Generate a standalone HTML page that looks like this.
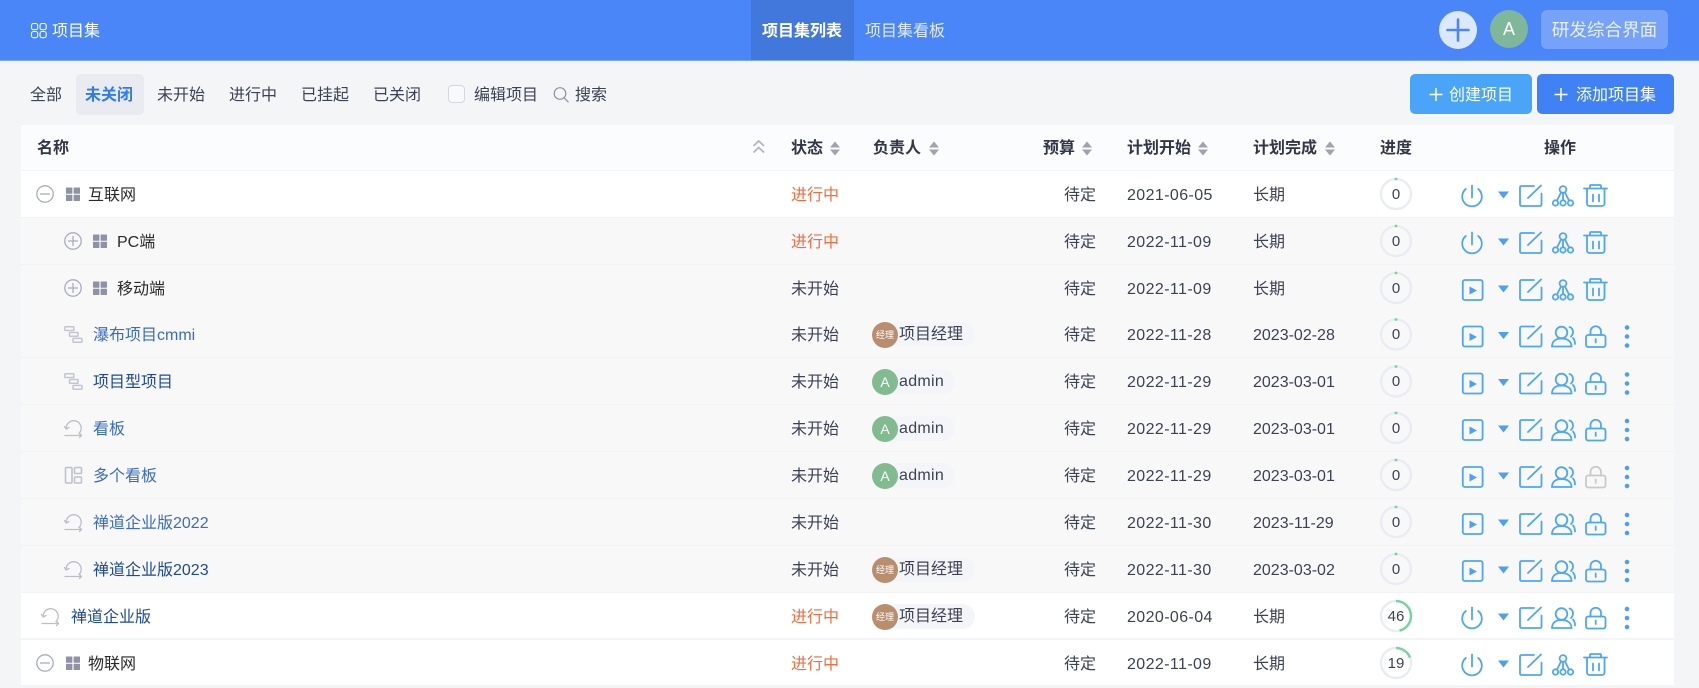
<!DOCTYPE html>
<html lang="zh-CN">
<head>
<meta charset="utf-8">
<title>项目集</title>
<style>
*{box-sizing:border-box;margin:0;padding:0}
html,body{width:1699px;height:688px;overflow:hidden;background:#f4f5f7;font-family:"Liberation Sans","Noto Sans CJK SC",sans-serif;font-size:16px;color:#3b4252}
.a{position:absolute;white-space:nowrap}
#top{position:absolute;left:0;top:0;width:1699px;height:61px;background:#4a86f7;border-bottom:1px solid #7aa6f9}
.t{line-height:40px;top:76px}
.hd{top:126px;line-height:46px;font-weight:700;color:#313746}
.r{position:absolute;left:21px;width:1653px;height:47px;background:#f8f8f9;border-bottom:1px solid #f3f3f5}
.w{background:#fff}
.c{position:absolute;white-space:nowrap;line-height:46px;top:2px}
.n{color:#2a2a2a}
.l1{color:#3a6cc4}
.l2{color:#1d4a9a}
.s{left:770px}
.o{color:#f56b3f}
.b{right:578px}
.d{left:1106px;letter-spacing:.4px}
.e{left:1232px}
.g{left:1355px;width:40px;text-align:center;font-size:15px;top:1px}
.chip{position:absolute;left:864px;top:11px;height:25px;background:#f4f5f8;border-radius:13px;line-height:26px;padding-left:14px;white-space:nowrap}
.av{position:absolute;left:851px;top:11px;width:26px;height:26px;border-radius:50%;color:#fff;text-align:center;line-height:26px}
.br{background:#b98e6e;font-size:9px}
.gr{background:#82bb8f;font-size:14px}
</style>
</head>
<body>
<div id="top"></div>
<div class="a" style="left:751px;top:0;width:103px;height:60px;background:#4277dc"></div>
<div class="a" style="left:52px;top:12px;line-height:40px;color:#fff">项目集</div>
<div class="a" style="left:762px;top:12px;line-height:40px;color:#fff;font-weight:700">项目集列表</div>
<div class="a" style="left:865px;top:12px;line-height:40px;color:#e3ecfe">项目集看板</div>
<div class="a" style="left:1439px;top:11px;width:38px;height:38px;border-radius:50%;background:#dce8fd"></div>
<div class="a" style="left:1490px;top:10px;width:38px;height:38px;border-radius:50%;background:#7fb79b;color:#fff;text-align:center;line-height:38px;font-size:18px">A</div>
<div class="a" style="left:1541px;top:10px;width:127px;height:39px;border-radius:6px;background:#76a2f9;color:#e8effe;text-align:center;line-height:41px;font-size:17.6px">研发综合界面</div>

<div class="a t" style="left:30px">全部</div>
<div class="a" style="left:76px;top:74px;width:68px;height:41px;border-radius:5px;background:#e9ebf1"></div>
<div class="a t" style="left:85px;color:#2f7cf0;font-weight:700">未关闭</div>
<div class="a t" style="left:157px">未开始</div>
<div class="a t" style="left:229px">进行中</div>
<div class="a t" style="left:301px">已挂起</div>
<div class="a t" style="left:373px">已关闭</div>
<div class="a" style="left:448px;top:85px;width:17px;height:18px;border:1px solid #d5d7dd;border-radius:4px;background:#f8f9fa"></div>
<div class="a t" style="left:474px">编辑项目</div>
<div class="a t" style="left:575px">搜索</div>
<div class="a" style="left:1410px;top:74px;width:122px;height:40px;border-radius:5px;background:#4aa5f8"></div>
<div class="a t" style="left:1449px;color:#fff">创建项目</div>
<div class="a" style="left:1537px;top:74px;width:137px;height:40px;border-radius:5px;background:#4082f6"></div>
<div class="a t" style="left:1576px;color:#fff">添加项目集</div>

<div class="a" style="left:21px;top:125px;width:1653px;height:46px;background:#fbfcfe;border-bottom:1px solid #f2f3f5"></div>
<div class="a hd" style="left:37px">名称</div>
<div class="a hd" style="left:791px">状态</div>
<div class="a hd" style="left:873px">负责人</div>
<div class="a hd" style="left:1043px">预算</div>
<div class="a hd" style="left:1127px">计划开始</div>
<div class="a hd" style="left:1253px">计划完成</div>
<div class="a hd" style="left:1380px">进度</div>
<div class="a hd" style="left:1544px">操作</div>

<div class="r w" style="top:171px">
<span class="c n" style="left:67px">互联网</span><span class="c s o">进行中</span><span class="c b">待定</span><span class="c d">2021-06-05</span><span class="c e">长期</span><span class="c g">0</span>
</div>
<div class="r" style="top:218px">
<span class="c n" style="left:96px">PC端</span><span class="c s o">进行中</span><span class="c b">待定</span><span class="c d">2022-11-09</span><span class="c e">长期</span><span class="c g">0</span>
</div>
<div class="r" style="top:265px">
<span class="c n" style="left:96px">移动端</span><span class="c s">未开始</span><span class="c b">待定</span><span class="c d">2022-11-09</span><span class="c e">长期</span><span class="c g">0</span>
</div>
<div class="r" style="top:311px">
<span class="c l1" style="left:72px">瀑布项目cmmi</span><span class="c s">未开始</span><div class="chip" style="width:90px">项目经理</div><div class="av br">经理</div><span class="c b">待定</span><span class="c d">2022-11-28</span><span class="c e">2023-02-28</span><span class="c g">0</span>
</div>
<div class="r" style="top:358px">
<span class="c l2" style="left:72px">项目型项目</span><span class="c s">未开始</span><div class="chip" style="width:70px;letter-spacing:.3px">admin</div><div class="av gr">A</div><span class="c b">待定</span><span class="c d">2022-11-29</span><span class="c e">2023-03-01</span><span class="c g">0</span>
</div>
<div class="r" style="top:405px">
<span class="c l1" style="left:72px">看板</span><span class="c s">未开始</span><div class="chip" style="width:70px;letter-spacing:.3px">admin</div><div class="av gr">A</div><span class="c b">待定</span><span class="c d">2022-11-29</span><span class="c e">2023-03-01</span><span class="c g">0</span>
</div>
<div class="r" style="top:452px">
<span class="c l1" style="left:72px">多个看板</span><span class="c s">未开始</span><div class="chip" style="width:70px;letter-spacing:.3px">admin</div><div class="av gr">A</div><span class="c b">待定</span><span class="c d">2022-11-29</span><span class="c e">2023-03-01</span><span class="c g">0</span>
</div>
<div class="r" style="top:499px">
<span class="c l1" style="left:72px">禅道企业版2022</span><span class="c s">未开始</span><span class="c b">待定</span><span class="c d">2022-11-30</span><span class="c e">2023-11-29</span><span class="c g">0</span>
</div>
<div class="r" style="top:546px">
<span class="c l2" style="left:72px">禅道企业版2023</span><span class="c s">未开始</span><div class="chip" style="width:90px">项目经理</div><div class="av br">经理</div><span class="c b">待定</span><span class="c d">2022-11-30</span><span class="c e">2023-03-02</span><span class="c g">0</span>
</div>
<div class="r w" style="top:593px;border-bottom:2px solid #f3f4f6">
<span class="c l2" style="left:50px">禅道企业版</span><span class="c o s">进行中</span><div class="chip" style="width:90px">项目经理</div><div class="av br">经理</div><span class="c b">待定</span><span class="c d">2020-06-04</span><span class="c e">长期</span><span class="c g">46</span>
</div>
<div class="r w" style="top:640px;border-bottom:2px solid #f3f4f6">
<span class="c n" style="left:67px">物联网</span><span class="c o s">进行中</span><span class="c b">待定</span><span class="c d">2022-11-09</span><span class="c e">长期</span><span class="c g">19</span>
</div>

<svg class="a" style="left:0;top:0" width="1699" height="688" viewBox="0 0 1699 688" xmlns="http://www.w3.org/2000/svg">
<defs>
<g id="ring"><circle cx="1396" cy="0" r="15" fill="none" stroke="#e9edf3" stroke-width="2.4"/></g>
<circle id="dot" cx="1396" cy="-15" r="1.4" fill="#72d69a"/>
<path id="tri" transform="translate(0,-.5)" d="M1498 -2H1509L1503.5 5Z" fill="#4a9ff8"/>
<path id="edit" transform="translate(0,-.5)" d="M1534 -7.5H1521.5a1.5 1.5 0 0 0-1.5 1.5V11a1.5 1.5 0 0 0 1.5 1.5H1540a1.5 1.5 0 0 0 1.5-1.5V0M1528 4.5L1541 -8" fill="none" stroke="#4da6f8" stroke-width="1.8" stroke-linecap="round"/>
<g id="power" transform="translate(0,-.5)" fill="none" stroke="#4da6f8" stroke-width="1.8" stroke-linecap="round"><path d="M1465.8 -4.5A9.8 9.8 0 1 0 1478.2 -4.5"/><path d="M1472 -8V4"/></g>
<g id="play" transform="translate(0,-.5)"><rect x="1462.8" y="-7.5" width="19.8" height="20" rx="2" fill="none" stroke="#4da6f8" stroke-width="1.8"/><path d="M1469.5 -1L1477 3L1469.5 7Z" fill="#4a9ff8"/></g>
<g id="tree" transform="translate(0,-.5)" fill="none" stroke="#4da6f8" stroke-width="1.8"><circle cx="1563" cy="-4" r="3.4"/><circle cx="1555.5" cy="9.5" r="2.7"/><circle cx="1563" cy="9.5" r="2.7"/><circle cx="1570.5" cy="9.5" r="2.7"/><path d="M1563 -0.5V6.5M1561 -1L1557 7M1565 -1L1569 7"/></g>
<g id="trash" transform="translate(0,-.5)" fill="none" stroke="#4da6f8" stroke-width="1.8" stroke-linecap="round"><path d="M1584 -5H1607M1590 -5V-7.5a1 1 0 0 1 1-1H1600a1 1 0 0 1 1 1V-5M1587 -5V10a2.5 2.5 0 0 0 2.5 2.5H1602a2.5 2.5 0 0 0 2.5-2.5V-5M1593 1V8M1599 1V8"/></g>
<g id="users" transform="translate(0,-.5)" fill="none" stroke="#4da6f8" stroke-width="1.8" stroke-linecap="round"><circle cx="1561.5" cy="-1.5" r="5.8"/><path d="M1552 12.5C1552 7 1556 4.5 1561.5 4.5C1567 4.5 1571.5 7 1571.5 12.5Z"/><path d="M1569.5 -7C1573 -6 1574.5 -1 1571 2.5M1573 4C1574.5 5.5 1575 7 1575 10"/></g>
<g id="lock" transform="translate(0,-.5)" fill="none" stroke-width="1.8" stroke-linecap="round"><rect x="1586" y="1" width="19.5" height="12" rx="2.2"/><path d="M1590.5 1V-2.5A5.2 5.2 0 0 1 1601 -2.5V1M1595.7 5V8.5"/></g>
<g id="dots" fill="#4a9ff8"><circle cx="1627" cy="-7" r="2.3"/><circle cx="1627" cy="2" r="2.3"/><circle cx="1627" cy="11" r="2.3"/></g>
<g id="grid" fill="#8d93a5"><rect x="0" y="0" width="6.4" height="6.2" rx=".5"/><rect x="7.6" y="0" width="6.4" height="6.2" rx=".5"/><rect x="0" y="7.3" width="6.4" height="6.2" rx=".5"/><rect x="7.6" y="7.3" width="6.4" height="6.2" rx=".5"/></g>
<g id="minus" fill="none" stroke="#a8adbb" stroke-width="1.3"><circle cx="0" cy="0" r="8.2"/><path d="M-5 0H5"/></g>
<g id="plus" fill="none" stroke="#a8adbb" stroke-width="1.3"><circle cx="0" cy="0" r="8.2"/><path d="M-5 0H5M0 -5V5"/></g>
<g id="gantt" fill="none" stroke="#c3c6cf" stroke-width="1.5"><rect x="64.8" y="-7.8" width="9" height="3.8" rx=".6"/><rect x="69.5" y="-2" width="8.5" height="3.8" rx=".6"/><rect x="73" y="3.9" width="9" height="3.8" rx=".6"/></g>
<g id="loop" fill="none" stroke="#bcbfca" stroke-width="1.3" stroke-linecap="round" stroke-linejoin="round"><path d="M66.2 1A7.5 7.5 0 1 1 79 5.5"/><path d="M65 7.5H81.5M79.5 5.5L81.5 7.5L79.5 9.5"/><path d="M64.5 -1.5L66.2 1L69 -.5"/></g>
<g id="multi" fill="none" stroke="#bfc2cc" stroke-width="1.6"><rect x="65.5" y="-7.5" width="6.5" height="15.5" rx="1"/><rect x="74.5" y="-7.5" width="7" height="6" rx="1"/><rect x="74.5" y="2" width="7" height="6" rx="1"/></g>
<g id="sort" fill="#9fa3ad"><path d="M0 -1L5 -7L10 -1Z"/><path d="M0 1H10L5 7Z"/></g>
<g id="ops2"><use href="#ring"/><use href="#dot"/><use href="#play"/><use href="#tri"/><use href="#edit"/><use href="#tree"/><use href="#trash"/></g>
<g id="ops3"><use href="#ring"/><use href="#dot"/><use href="#play"/><use href="#tri"/><use href="#edit"/><use href="#users"/><use href="#dots"/></g>
</defs>

<!-- header icons -->
<g fill="none" stroke="#fff" stroke-width="1.1"><rect x="31.5" y="23.5" width="6.2" height="6.2" rx="2"/><rect x="40" y="23.5" width="6.2" height="6.2" rx="2"/><rect x="31.5" y="31.5" width="6.2" height="6.2" rx="2"/><rect x="40" y="31.5" width="6.2" height="6.2" rx="2"/></g>
<path d="M1447.5 30H1468.5M1458 19.5V40.5" stroke="#4a86f7" stroke-width="2.6" fill="none" stroke-linecap="round"/>
<g fill="none" stroke="#8f94a0" stroke-width="1.2"><circle cx="560" cy="93.5" r="5.8"/><path d="M564.2 97.8L568.5 102.3"/></g>
<path d="M1429.5 94.5H1442.5M1436 88V101" stroke="#fff" stroke-width="1.5" fill="none"/>
<path d="M1554.5 94.5H1567.5M1561 88V101" stroke="#fff" stroke-width="1.5" fill="none"/>

<!-- table header sort -->
<g fill="none" stroke="#b3b6bf" stroke-width="1.8"><path d="M753.5 146L758.7 141L764 146M753.5 152.5L758.7 147.5L764 152.5"/></g>
<use href="#sort" x="830" y="148.5"/>
<use href="#sort" x="929" y="148.5"/>
<use href="#sort" x="1082" y="148.5"/>
<use href="#sort" x="1198" y="148.5"/>
<use href="#sort" x="1325" y="148.5"/>

<!-- tree icons -->
<use href="#minus" x="45" y="194"/><use href="#grid" x="66" y="187.5"/>
<use href="#plus" x="73" y="241"/><use href="#grid" x="93" y="234.5"/>
<use href="#plus" x="73" y="288"/><use href="#grid" x="93" y="281.5"/>
<use href="#gantt" y="334.5"/>
<use href="#gantt" y="381.5"/>
<use href="#loop" y="428"/>
<use href="#multi" y="475"/>
<use href="#loop" y="522"/>
<use href="#loop" y="569"/>
<use href="#loop" x="-23" y="616"/>
<use href="#minus" x="45" y="663"/><use href="#grid" x="66" y="656.5"/>

<!-- row actions -->
<g transform="translate(0,194)"><use href="#ring"/><use href="#dot"/><use href="#power"/><use href="#tri"/><use href="#edit"/><use href="#tree"/><use href="#trash"/></g>
<g transform="translate(0,241)"><use href="#ring"/><use href="#dot"/><use href="#power"/><use href="#tri"/><use href="#edit"/><use href="#tree"/><use href="#trash"/></g>
<use href="#ops2" y="288"/>
<g transform="translate(0,334.5)"><use href="#ops3"/><use href="#lock" stroke="#4da6f8"/></g>
<g transform="translate(0,381.5)"><use href="#ops3"/><use href="#lock" stroke="#4da6f8"/></g>
<g transform="translate(0,428)"><use href="#ops3"/><use href="#lock" stroke="#4da6f8"/></g>
<g transform="translate(0,475)"><use href="#ops3"/><use href="#lock" stroke="#c9c9c9"/></g>
<g transform="translate(0,522)"><use href="#ops3"/><use href="#lock" stroke="#4da6f8"/></g>
<g transform="translate(0,569)"><use href="#ops3"/><use href="#lock" stroke="#4da6f8"/></g>
<g transform="translate(0,616)"><use href="#ring"/><circle cx="1396" cy="0" r="15" fill="none" stroke="#72d69a" stroke-width="2.4" stroke-dasharray="43.4 94.3" transform="rotate(-90 1396 0)"/><use href="#power"/><use href="#tri"/><use href="#edit"/><use href="#users"/><use href="#lock" stroke="#4da6f8"/><use href="#dots"/></g>
<g transform="translate(0,663)"><use href="#ring"/><circle cx="1396" cy="0" r="15" fill="none" stroke="#72d69a" stroke-width="2.4" stroke-dasharray="17.9 94.3" transform="rotate(-90 1396 0)"/><use href="#power"/><use href="#tri"/><use href="#edit"/><use href="#tree"/><use href="#trash"/></g>
</svg>
</body>
</html>
